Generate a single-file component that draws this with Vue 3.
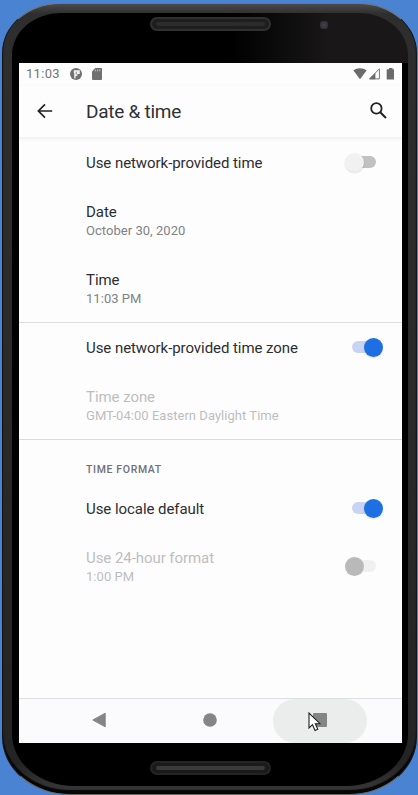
<script setup>
const sections = [
  {
    rows: [
      { title: 'Use network-provided time', toggle: 'off' },
      { title: 'Date', summary: 'October 30, 2020' },
      { title: 'Time', summary: '11:03 PM' },
    ],
  },
  {
    rows: [
      { title: 'Use network-provided time zone', toggle: 'on' },
      { title: 'Time zone', summary: 'GMT-04:00 Eastern Daylight Time', disabled: true },
    ],
  },
  {
    heading: 'TIME FORMAT',
    rows: [
      { title: 'Use locale default', toggle: 'on' },
      { title: 'Use 24-hour format', summary: '1:00 PM', disabled: true, toggle: 'off' },
    ],
  },
]
</script>

<template>
  <div class="desktop">
    <div class="phone">
      <div class="face">
        <header class="top-bezel">
          <span class="speaker"><i></i></span>
          <span class="camera"></span>
        </header>

        <main class="screen">
          <div class="status">
            <span class="clock">11:03</span>
            <svg class="badge-icon" viewBox="0 0 12 12">
              <circle cx="6" cy="6" r="6" fill="#707070" />
              <path d="M3.8 2.2H9.8V6H7.4V8H5.6V10.4H4.2V5H3.8Z" fill="#f0f0f0" />
              <path d="M5.8 3.8H6.6V6.4H5.8Z" fill="#707070" />
            </svg>
            <svg class="sd-icon" viewBox="0 0 10 12">
              <path d="M3.2 0H9a1 1 0 0 1 1 1v10a1 1 0 0 1-1 1H1a1 1 0 0 1-1-1V3.4Z" fill="#707070" />
              <path d="M3.4 1.5V3.3M5.6 1.5V3.3M7.8 1.5V3.3" stroke="#c8c8c8" stroke-width=".9" />
            </svg>
            <svg class="signal-icons" viewBox="0 0 42 12">
              <path d="M0.4 2.5C4 -0.5 10 -0.5 13.6 2.5L7 11.2Z" fill="#6b6b6b" />
              <path d="M26.4 .8V10.9H16.6Z" fill="none" stroke="#777" stroke-width="1" />
              <path d="M22.4 4.8V11.3H16Z" fill="#6b6b6b" />
              <path d="M36 .1H39.5V1.2H41V11.6H33.7V1.2H36Z" fill="#6b6b6b" />
            </svg>
          </div>

          <div class="appbar">
            <svg class="back" viewBox="0 0 16 16">
              <path d="M15.2 8H1.6M8 1.4L1.4 8L8 14.6" fill="none" stroke="#202124" stroke-width="1.7" />
            </svg>
            <h1>Date &amp; time</h1>
            <svg class="search" viewBox="0 0 17 17">
              <circle cx="6.4" cy="6.4" r="5.2" fill="none" stroke="#202124" stroke-width="1.8" />
              <path d="M10.2 10.2L16 16" stroke="#202124" stroke-width="2" />
            </svg>
          </div>

          <div class="content">
            <section v-for="(section, i) in sections" :key="i" class="section">
              <h2 v-if="section.heading">{{ section.heading }}</h2>
              <div
                v-for="row in section.rows"
                :key="row.title"
                class="row"
                :class="{ tall: row.summary, disabled: row.disabled }"
              >
                <div class="labels">
                  <div class="title">{{ row.title }}</div>
                  <div v-if="row.summary" class="summary">{{ row.summary }}</div>
                </div>
                <span v-if="row.toggle" class="toggle" :class="row.toggle"><i></i></span>
              </div>
            </section>
          </div>

          <nav class="navbar">
            <span class="nav-item">
              <svg viewBox="0 0 14 16"><path d="M13.2 1.2V14.8L.8 8Z" fill="#858585" stroke="#858585" stroke-linejoin="round" /></svg>
            </span>
            <span class="nav-item">
              <svg viewBox="0 0 14 16"><circle cx="7" cy="8" r="6.8" fill="#858585" /></svg>
            </span>
            <span class="nav-item pressed">
              <svg viewBox="0 0 14 16"><rect x="0" y="1" width="14" height="14" rx="1" fill="#858585" /></svg>
              <svg class="cursor" viewBox="0 0 13 20">
                <path d="M1 1V16L4.5 12.7L7 18.5L9.8 17.3L7.3 11.7H12Z" fill="#fff" stroke="#222" stroke-width="1.1" />
              </svg>
            </span>
          </nav>
        </main>

        <footer class="bottom-bezel">
          <span class="speaker"><i></i></span>
        </footer>
      </div>
    </div>
  </div>
</template>

<style>
body {
  margin: 0;
  overflow: hidden;
}
</style>

<style scoped>
.desktop {
  box-sizing: border-box;
  width: 418px;
  height: 795px;
  padding: 3px 1px 0 2px;
  background: #4a83d2;
  font-family: Roboto, sans-serif;
}
.phone {
  box-sizing: border-box;
  height: 792px;
  padding: 9px 8px 8px 9px;
  border: 1px solid #151515;
  border-top-color: #777;
  border-bottom-color: #6a6864;
  border-radius: 58px 58px 68px 68px / 50px 50px 58px 58px;
  background: linear-gradient(#4a4a4a, #2e2e2e 10px, #2a2a2a 50%, #242424 760px, #343434 782px);
  box-shadow: inset 0 -4px 1px #060606;
}
.face {
  height: 100%;
  display: flex;
  flex-direction: column;
  border-radius: 49px 49px 62px 62px / 42px 42px 52px 52px;
  background: linear-gradient(90deg, #000 55%, #191718 80%) top / 100% 50px no-repeat #000;
}
.top-bezel {
  flex: 0 0 50px;
  display: flex;
  align-items: flex-start;
}
.speaker {
  box-sizing: border-box;
  width: 121px;
  height: 14px;
  margin: 4px 0 0 138px;
  padding: 3px 4px;
  border: 2px solid #303030;
  border-radius: 7px;
  background: #1e1e1e;
  display: flex;
}
.speaker i {
  flex: 1;
  border-radius: 2px;
  background: #2c2c2c;
}
.camera {
  width: 8px;
  height: 8px;
  margin: 8px 0 0 49px;
  border-radius: 3px;
  background: radial-gradient(#45444c, #28272d);
}
.bottom-bezel .speaker {
  margin-top: 18px;
  border-color: #242424;
  background: #1a1a1a;
}
.bottom-bezel .speaker i {
  background: #3a3a3a;
}
.screen {
  flex: 0 0 680px;
  width: 383px;
  margin-left: 7px;
  display: flex;
  flex-direction: column;
  background: #fdfdfe;
}
.status {
  height: 23px;
  padding: 0 8px 0 7px;
  display: flex;
  align-items: center;
}
.clock {
  width: 44px;
  font-size: 13px;
  line-height: 16px;
  padding-bottom: 1px;
  letter-spacing: 0.3px;
  color: #747474;
}
.badge-icon {
  width: 12px;
  height: 12px;
  margin-bottom: 1px;
}
.sd-icon {
  width: 10px;
  height: 12px;
  margin: 0 0 1px 10px;
}
.signal-icons {
  width: 42px;
  height: 12px;
  margin: 0 -1px 2px auto;
}
.appbar {
  box-sizing: border-box;
  height: 52px;
  padding: 0 15px 1px 18px;
  display: flex;
  align-items: center;
  border-bottom: 1px solid #f1f1f2;
  box-shadow: 0 1px 4px #0000000f;
}
.back {
  width: 16px;
  height: 16px;
  margin-bottom: 1px;
}
h1 {
  flex: 1;
  margin: 2px 0 0 33px;
  font-size: 19px;
  font-weight: 400;
  line-height: 24px;
  letter-spacing: -0.26px;
  color: #303134;
}
.search {
  width: 17px;
  height: 17px;
  margin-bottom: 1px;
}
.content {
  flex: 1;
}
.section + .section {
  border-top: 1px solid #dcdcdd;
}
.section:nth-child(2) {
  height: 117px;
  box-sizing: border-box;
}
h2 {
  height: 44px;
  margin: 0;
  padding: 17px 0 0 67px;
  box-sizing: border-box;
  font-size: 10.5px;
  line-height: 26px;
  font-weight: 500;
  letter-spacing: 0.65px;
  color: #707175;
}
.row {
  height: 49px;
  padding: 0 26px 0 67px;
  display: flex;
  align-items: center;
  justify-content: space-between;
}
.row:not(.tall) .labels {
  padding-top: 1px;
}
.row.tall {
  height: 67.5px;
}
.tall .labels {
  padding-top: 2px;
}
.title {
  font-size: 15px;
  line-height: 19px;
  letter-spacing: -0.06px;
  color: #2d2e31;
}
.summary {
  font-size: 13px;
  line-height: 18px;
  letter-spacing: 0.04px;
  color: #818286;
}
.disabled .title,
.disabled .summary {
  color: #bdbdbf;
}
.toggle {
  box-sizing: border-box;
  width: 24px;
  height: 12px;
  margin-bottom: 1px;
  border-radius: 6px;
  background: #c1c1c2;
  display: flex;
  align-items: center;
}
.toggle i {
  flex: none;
  width: 19px;
  height: 19px;
  margin-left: -7px;
  border-radius: 50%;
  background: #f1f1f1;
  box-shadow: 0 1px 2px #00000020;
}
.toggle.on {
  background: #c9d3f2;
}
.toggle.on i {
  margin-left: 12px;
  background: #1d6fe2;
}
.disabled .toggle {
  background: #f0f0f0;
}
.disabled .toggle i {
  background: #b9b9b9;
  box-shadow: none;
}
.navbar {
  box-sizing: border-box;
  height: 45px;
  padding: 0 35px 0 33px;
  display: flex;
  justify-content: space-between;
  border-top: 1px solid #dedfe0;
  background: #fbfafc;
}
.nav-item {
  width: 94px;
  padding-bottom: 2px;
  display: flex;
  align-items: center;
  justify-content: center;
}
.nav-item svg {
  width: 14px;
  height: 16px;
}
.pressed {
  position: relative;
  border-radius: 22px;
  background: #ebecec;
}
.nav-item .cursor {
  position: absolute;
  left: 35px;
  top: 13px;
  width: 13px;
  height: 20px;
}
</style>
